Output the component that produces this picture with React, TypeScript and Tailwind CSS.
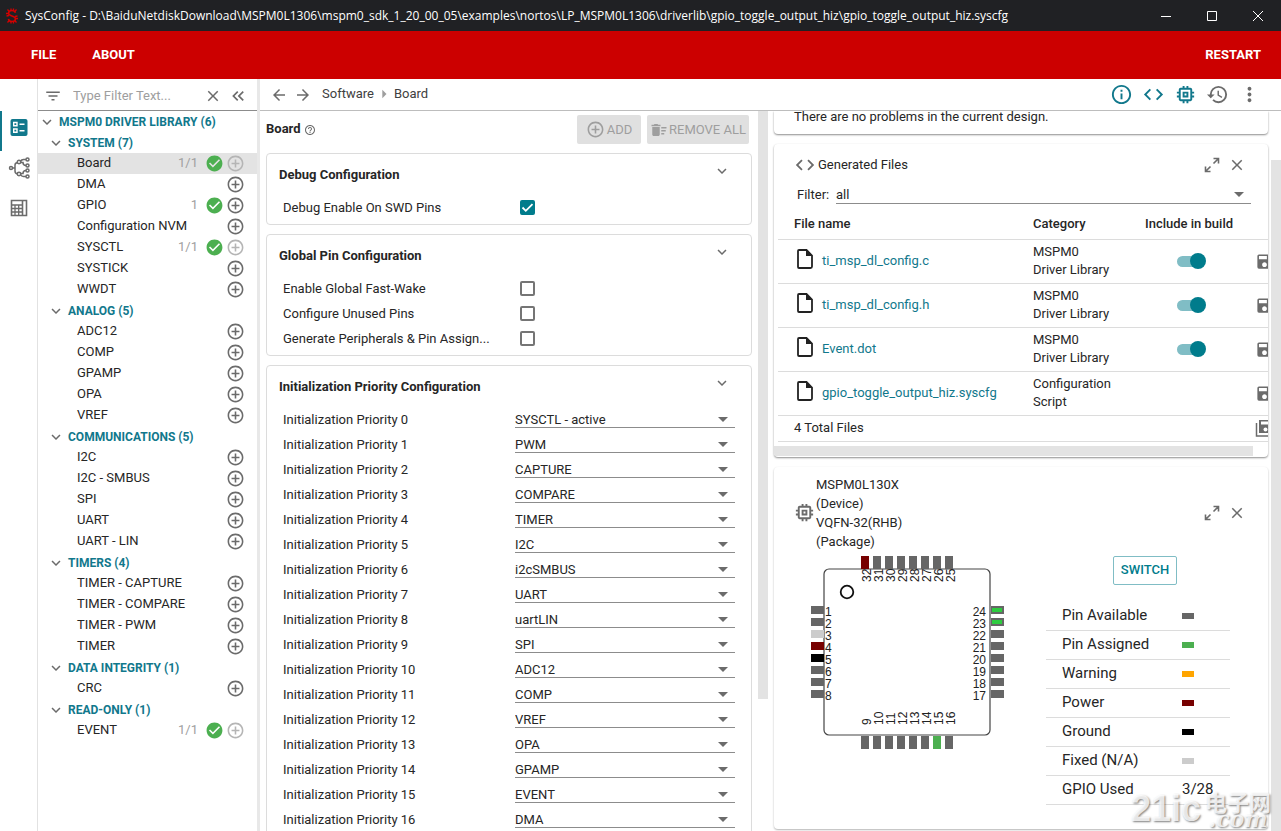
import { useState } from 'react';
import type { ReactNode } from 'react';
import {
  MdAddCircleOutline,
  MdArrowBack,
  MdArrowDropDown,
  MdArrowForward,
  MdArrowRight,
  MdCheckCircle,
  MdClose,
  MdCode,
  MdDeleteSweep,
  MdExpandMore,
  MdFilterList,
  MdHelpOutline,
  MdHistory,
  MdInfoOutline,
  MdKeyboardDoubleArrowLeft,
  MdMemory,
  MdMoreVert,
  MdSave,
} from 'react-icons/md';

interface TreeItem {
  name: string;
  count?: string;
  full?: boolean;
}

interface TreeGroup {
  title: string;
  items: TreeItem[];
}

const groups: TreeGroup[] = [
  {
    title: 'SYSTEM (7)',
    items: [
      { name: 'Board', count: '1/1', full: true },
      { name: 'DMA' },
      { name: 'GPIO', count: '1' },
      { name: 'Configuration NVM' },
      { name: 'SYSCTL', count: '1/1', full: true },
      { name: 'SYSTICK' },
      { name: 'WWDT' },
    ],
  },
  {
    title: 'ANALOG (5)',
    items: [{ name: 'ADC12' }, { name: 'COMP' }, { name: 'GPAMP' }, { name: 'OPA' }, { name: 'VREF' }],
  },
  {
    title: 'COMMUNICATIONS (5)',
    items: [{ name: 'I2C' }, { name: 'I2C - SMBUS' }, { name: 'SPI' }, { name: 'UART' }, { name: 'UART - LIN' }],
  },
  {
    title: 'TIMERS (4)',
    items: [{ name: 'TIMER - CAPTURE' }, { name: 'TIMER - COMPARE' }, { name: 'TIMER - PWM' }, { name: 'TIMER' }],
  },
  { title: 'DATA INTEGRITY (1)', items: [{ name: 'CRC' }] },
  { title: 'READ-ONLY (1)', items: [{ name: 'EVENT', count: '1/1', full: true }] },
];

const priorities = [
  'SYSCTL - active', 'PWM', 'CAPTURE', 'COMPARE', 'TIMER', 'I2C', 'i2cSMBUS', 'UART', 'uartLIN',
  'SPI', 'ADC12', 'COMP', 'VREF', 'OPA', 'GPAMP', 'EVENT', 'DMA',
];

const files = [
  { name: 'ti_msp_dl_config.c', category: ['MSPM0', 'Driver Library'], toggle: true },
  { name: 'ti_msp_dl_config.h', category: ['MSPM0', 'Driver Library'], toggle: true },
  { name: 'Event.dot', category: ['MSPM0', 'Driver Library'], toggle: true },
  { name: 'gpio_toggle_output_hiz.syscfg', category: ['Configuration', 'Script'], toggle: false },
];

const legend = [
  { label: 'Pin Available', color: 'bg-[#666666]' },
  { label: 'Pin Assigned', color: 'bg-[#4caf50]' },
  { label: 'Warning', color: 'bg-[#ffa500]' },
  { label: 'Power', color: 'bg-[#770000]' },
  { label: 'Ground', color: 'bg-black' },
  { label: 'Fixed (N/A)', color: 'bg-[#cccccc]' },
];

const pinColors: Record<number, string> = {
  3: '#cccccc',
  4: '#770000',
  5: '#000000',
  15: '#4caf50',
  32: '#770000',
};

function TitleBar() {
  return (
    <div className="flex h-[31px] shrink-0 items-center bg-[#202124] text-white">
      <svg viewBox="0 0 14 16" className="ml-[5px] h-4 w-3.5 shrink-0" fill="none" stroke="#d40000">
        <path d="M10.5 4.800C10 3.200 8.800 2.500 7 2.500C5 2.500 3.500 3.500 3.500 5.200C3.500 8.500 10.500 7.300 10.500 10.700C10.500 12.500 9 13.500 7 13.500C5 13.500 3.800 12.700 3.400 11" strokeWidth="1.600" />
        <path d="M6 .5v2M8.500 .5v2M6 13.500v2M8.500 13.500v2M2.500 1.500l1.500 1.700M11.500 1.500L10 3.200M1 5.500h2.500M1.500 8l2.500-.5M10 8.500l2.500-.5M10.500 10.500H13M2.500 14.500L4 12.800M11.500 14.500L10 12.800" strokeWidth="1.300" />
      </svg>
      <span className="ml-1.5 flex-1 truncate font-['Open_Sans',sans-serif] text-xs">
        SysConfig - D:\BaiduNetdiskDownload\MSPM0L1306\mspm0_sdk_1_20_00_05\examples\nortos\LP_MSPM0L1306\driverlib\gpio_toggle_output_hiz\gpio_toggle_output_hiz.syscfg
      </span>
      <div className="flex shrink-0">
        <button type="button" aria-label="Minimize" className="flex h-[31px] w-[46px] items-center justify-center">
          <svg viewBox="0 0 10 10" className="size-2.5" stroke="currentColor" fill="none">
            <path d="M0 5.500h10" />
          </svg>
        </button>
        <button type="button" aria-label="Maximize" className="flex h-[31px] w-[46px] items-center justify-center">
          <svg viewBox="0 0 10 10" className="size-2.5" stroke="currentColor" fill="none">
            <path d="M.5.5h9v9h-9z" />
          </svg>
        </button>
        <button type="button" aria-label="Close" className="flex h-[31px] w-[46px] items-center justify-center">
          <svg viewBox="0 0 10 10" className="size-2.5" stroke="currentColor" fill="none">
            <path d="M0 0l10 10M10 0L0 10" />
          </svg>
        </button>
      </div>
    </div>
  );
}

function MenuBar() {
  return (
    <header className="flex h-12 shrink-0 items-center bg-[#cc0000] pr-5 pl-[31px] text-[13px] font-bold text-white">
      <button type="button">FILE</button>
      <button type="button" className="ml-9">ABOUT</button>
      <button type="button" className="ml-auto">RESTART</button>
    </header>
  );
}

function Rail() {
  return (
    <nav className="flex w-[38px] shrink-0 flex-col border-r border-[#e2e2e2] pt-8 text-[#6b6b6b]">
      <button type="button" aria-label="Software" className="flex h-10 items-start border-l-2 border-[#11788c] pt-2 pl-2 text-[#11788c]">
        <svg viewBox="0 0 18 18" className="size-[18px]">
          <rect x=".5" width="17" height="17" rx="2" fill="currentColor" />
          <path d="M3.700 3.500h3.300v3.300h-3.300zM3.700 10h3.300v3.300h-3.300zM9.500 5.200h5M9.500 11.700h5" fill="none" stroke="white" strokeWidth="1.400" />
        </svg>
      </button>
      <button type="button" aria-label="Hardware" className="flex h-10 items-start pt-1.5 pl-2">
        <svg viewBox="0 0 22 22" className="size-[22px]" fill="none" stroke="currentColor" strokeWidth="1.500">
          <path d="M4.500 11H7M9.500 5.500Q7 6 7 8v6q0 2.500 2.500 3M12.500 4.500q1-2 3-2H18M12.500 5.500H15q0 3 3 3M12.500 16.500H15q0-3 3-3M12.500 17.500q1 2 3 2H18" />
          <circle cx="3" cy="11" r="1.500" />
          <circle cx="11" cy="5" r="1.700" />
          <circle cx="11" cy="17" r="1.700" />
          <circle cx="19.500" cy="2.500" r="1.500" />
          <circle cx="19.500" cy="8.500" r="1.500" />
          <circle cx="19.500" cy="13.500" r="1.500" />
          <circle cx="19.500" cy="19.500" r="1.500" />
        </svg>
      </button>
      <button type="button" aria-label="Calculator" className="flex h-10 items-start pt-2 pl-2.5">
        <svg viewBox="0 0 18 18" className="size-[18px]" fill="none" stroke="currentColor">
          <path d="M1.500 1.500h15v15h-15zM12.500 1.500v15" strokeWidth="1.600" />
          <path d="M2 6h10M2 9.500h10M2 13h10M5 6v10M8.700 6v10" strokeWidth="1.300" />
        </svg>
      </button>
    </nav>
  );
}

function Sidebar() {
  const [filter, setFilter] = useState('');

  return (
    <aside className="flex w-[219px] shrink-0 flex-col overflow-hidden">
      <div className="flex h-8 shrink-0 items-center border-b border-[#8c8c8c] pt-0.5 pr-[9px] pl-1.5 text-[#6b6b6b]">
        <MdFilterList size={18} />
        <input
          type="text"
          aria-label="Type Filter Text"
          placeholder="Type Filter Text..."
          value={filter}
          onChange={(e) => setFilter(e.target.value)}
          className="ml-[11px] w-0 flex-1 text-[13px] outline-none placeholder:text-[#9e9e9e]"
        />
        <button type="button" aria-label="Clear filter">
          <MdClose size={18} />
        </button>
        <button type="button" aria-label="Collapse panel" className="ml-1.5">
          <MdKeyboardDoubleArrowLeft size={20} />
        </button>
      </div>

      <div className="flex h-[21px] items-center text-xs font-bold text-[#11788c]">
        <MdExpandMore size={18} className="text-[#6b6b6b]" />
        <span className="ml-[3px]">MSPM0 DRIVER LIBRARY (6)</span>
      </div>
      {groups.map((group) => (
        <div key={group.title}>
          <div className="flex h-[21px] items-center pl-[9px] text-xs font-bold text-[#11788c]">
            <MdExpandMore size={18} className="text-[#6b6b6b]" />
            <span className="ml-[3px]">{group.title}</span>
          </div>
          {group.items.map((item) => (
            <div
              key={item.name}
              className={`flex h-[21px] items-center pr-3 pl-[39px] text-[13px] ${
                item.name === 'Board' ? 'bg-[#e3e3e3]' : ''
              }`}
            >
              <span className="pb-0.5">{item.name}</span>
              {item.count && <span className="mr-[7px] ml-auto pb-0.5 text-[#a0a0a0]">{item.count}</span>}
              {item.count && <MdCheckCircle size={19} className="mr-0.5 text-[#4caf50]" />}
              <button
                type="button"
                aria-label={`Add ${item.name}`}
                disabled={item.full}
                className={`${item.count ? '' : 'ml-auto'} ${item.full ? 'text-[#b5b5b5]' : 'text-[#6b6b6b]'}`}
              >
                <MdAddCircleOutline size={19} />
              </button>
            </div>
          ))}
        </div>
      ))}
    </aside>
  );
}

function Toolbar() {
  return (
    <div className="flex h-8 shrink-0 items-center border-b border-[#bdbdbd] pr-4 pl-2.5 text-[#6b6b6b]">
      <button type="button" aria-label="Back">
        <MdArrowBack size={18} />
      </button>
      <button type="button" aria-label="Forward" className="ml-1.5">
        <MdArrowForward size={18} />
      </button>
      <nav className="ml-2.5 flex items-center pb-0.5 text-[13px] text-[#404040]">
        <a href="#software">Software</a>
        <MdArrowRight size={20} className="text-[#9e9e9e]" />
        <a href="#board">Board</a>
      </nav>
      <div className="ml-auto flex text-[#11788c]">
        <button type="button" aria-label="Problems" className="flex w-8 justify-center">
          <MdInfoOutline size={23} />
        </button>
        <button type="button" aria-label="Generated files" className="flex w-8 justify-center">
          <MdCode size={23} />
        </button>
        <button type="button" aria-label="Device view" className="flex w-8 justify-center">
          <MdMemory size={23} />
        </button>
        <button type="button" aria-label="History" className="flex w-8 justify-center text-[#6b6b6b]">
          <MdHistory size={23} />
        </button>
        <button type="button" aria-label="More" className="flex w-8 justify-center text-[#6b6b6b]">
          <MdMoreVert size={23} />
        </button>
      </div>
    </div>
  );
}

function ConfigCard({ title, children }: { title: string; children: ReactNode }) {
  return (
    <section className="mb-[9px] rounded border border-[#dcdcdc] pb-1">
      <div className="flex h-[41px] items-center justify-between pr-5 pl-3">
        <h2 className="text-[13px] font-bold">{title}</h2>
        <button type="button" aria-label={`Collapse ${title}`} className="mt-2 self-start text-[#6b6b6b]">
          <MdExpandMore size={18} />
        </button>
      </div>
      {children}
    </section>
  );
}

function CheckRow({ id, label, initial = false }: { id: string; label: string; initial?: boolean }) {
  const [checked, setChecked] = useState(initial);

  return (
    <div className="flex h-[25px] items-center pl-4">
      <label htmlFor={id} className="w-[237px] whitespace-nowrap">{label}</label>
      <span className="relative flex size-[15px]">
        <input
          id={id}
          type="checkbox"
          checked={checked}
          onChange={(e) => setChecked(e.target.checked)}
          className="peer size-[15px] appearance-none rounded-xs border-2 border-[#757575] checked:border-[#007c8c] checked:bg-[#007c8c]"
        />
        <svg
          viewBox="0 0 15 15"
          className="pointer-events-none absolute inset-0 hidden peer-checked:block"
          fill="none"
          stroke="white"
          strokeWidth="1.800"
        >
          <path d="M2.500 7.500l3.300 3.300 6.700-6.700" />
        </svg>
      </span>
    </div>
  );
}

function BoardPanel() {
  return (
    <div className="flex min-h-0 overflow-hidden">
      <div className="min-w-0 flex-1 px-1.5">
        <div className="flex h-[42px] items-start pt-1 pr-[3px]">
          <h1 className="mt-1 text-[13px] font-bold">Board</h1>
          <MdHelpOutline size={12} className="mt-[9px] ml-[3px] text-[#6b6b6b]" />
          <button type="button" disabled className="ml-auto flex h-[29px] w-16 items-center justify-center rounded-xs bg-[#e0e0e0] text-[13px] text-[#9e9e9e]">
            <MdAddCircleOutline size={19} className="mr-0.5" />
            ADD
          </button>
          <button type="button" disabled className="ml-1.5 flex h-[29px] w-[102px] items-center justify-center rounded-xs bg-[#e0e0e0] text-[13px] whitespace-nowrap text-[#9e9e9e]">
            <MdDeleteSweep size={18} className="mr-px" />
            REMOVE ALL
          </button>
        </div>

        <div className="text-[13px]">
          <ConfigCard title="Debug Configuration">
            <CheckRow id="swd-pins" label="Debug Enable On SWD Pins" initial />
          </ConfigCard>
          <ConfigCard title="Global Pin Configuration">
            <CheckRow id="fast-wake" label="Enable Global Fast-Wake" />
            <CheckRow id="unused-pins" label="Configure Unused Pins" />
            <CheckRow id="pin-assign" label="Generate Peripherals & Pin Assign..." />
          </ConfigCard>
          <ConfigCard title="Initialization Priority Configuration">
            {priorities.map((value, i) => (
              <div key={value} className="flex h-[25px] items-start pr-4 pl-4">
                <label htmlFor={`priority-${i}`} className="w-[232px] leading-[25px]">
                  Initialization Priority {i}
                </label>
                <div className="relative flex-1">
                  <select
                    id={`priority-${i}`}
                    defaultValue={value}
                    className="block h-[21px] w-full appearance-none border-b border-[#8c8c8c] pt-[3px] outline-none"
                  >
                    {priorities.map((option) => (
                      <option key={option}>{option}</option>
                    ))}
                  </select>
                  <MdArrowDropDown size={24} className="pointer-events-none absolute top-0 right-0 text-[#6b6b6b]" />
                </div>
              </div>
            ))}
          </ConfigCard>
        </div>
      </div>
      <div aria-hidden="true" className="w-2.5 shrink-0">
        <div className="h-[588px] bg-[#e3e3e3]" />
      </div>
    </div>
  );
}

function PanelActions() {
  return (
    <div className="ml-auto flex items-center gap-2 text-[#6b6b6b]">
      <button type="button" aria-label="Expand">
        <svg viewBox="0 0 16 16" className="size-4" fill="none" stroke="currentColor" strokeWidth="1.600">
          <path d="M9.500 1.500h5v5M14.500 1.500l-5 5M1.500 9.500v5h5M1.500 14.500l5-5" />
        </svg>
      </button>
      <button type="button" aria-label="Close">
        <MdClose size={18} />
      </button>
    </div>
  );
}

function Toggle({ label }: { label: string }) {
  const [on, setOn] = useState(true);

  return (
    <span className="relative flex h-4 w-[30px] items-center">
      <input
        type="checkbox"
        role="switch"
        aria-label={label}
        checked={on}
        onChange={(e) => setOn(e.target.checked)}
        className="peer h-[11px] w-[26px] appearance-none rounded-full bg-[#bdbdbd] checked:bg-[#80bdc5]"
      />
      <span className="pointer-events-none absolute top-0 left-0 size-4 rounded-full bg-[#9e9e9e] peer-checked:left-[13px] peer-checked:bg-[#007c8c]" />
    </span>
  );
}

function GeneratedFiles() {
  return (
    <section className="overflow-hidden rounded bg-white shadow-[0_1px_2px_rgba(0,0,0,0.45)]">
      <div className="flex h-[42px] items-center pr-[22px] pl-5">
        <MdCode size={22} className="text-[#6b6b6b]" />
        <h2 className="ml-0.5 text-[13px]">Generated Files</h2>
        <PanelActions />
      </div>
      <div className="flex h-[18px] pr-[17px] pl-[23px]">
        <label htmlFor="file-filter" className="w-[39px] text-[13px] leading-[18px]">Filter:</label>
        <div className="relative flex-1">
          <select id="file-filter" className="block h-[18px] w-full appearance-none border-b border-[#8c8c8c] text-[13px] leading-4 outline-none">
            <option>all</option>
          </select>
          <MdArrowDropDown size={24} className="pointer-events-none absolute -top-1 right-0 text-[#6b6b6b]" />
        </div>
      </div>

      <div className="overflow-hidden pl-1">
        <table className="w-full min-w-[520px] table-fixed text-left text-[13px]">
          <colgroup>
            <col className="w-[239px]" />
            <col className="w-28" />
            <col className="w-28" />
            <col />
          </colgroup>
          <thead>
            <tr className="h-[35px] border-b border-[#dcdcdc]">
              <th className="pt-1 pl-4 font-medium">File name</th>
              <th className="pt-1 pl-4 font-medium">Category</th>
              <th className="pt-1 pl-4 font-medium whitespace-nowrap">Include in build</th>
              <th />
            </tr>
          </thead>
          <tbody>
            {files.map((file) => (
              <tr key={file.name} className="h-11 border-b border-[#dcdcdc]">
                <td>
                  <div className="flex items-center pl-[18px]">
                    <svg viewBox="0 0 18 20" className="mb-1 h-5 w-[18px] shrink-0" fill="none" stroke="#222222" strokeWidth="1.800">
                      <path d="M3 1h7.500L16 6.500V17.500Q16 19 14.500 19H3Q2 19 2 18V2Q2 1 3 1z" />
                      <path d="M10 1v6H16z" fill="#222222" stroke="none" />
                    </svg>
                    <a href={`#${file.name}`} className="ml-2 whitespace-nowrap text-[#11788c]">{file.name}</a>
                  </div>
                </td>
                <td className="pl-4 leading-[18px]">
                  {file.category[0]}
                  <br />
                  {file.category[1]}
                </td>
                <td className="pl-12">{file.toggle && <Toggle label={`Include ${file.name} in build`} />}</td>
                <td className="pl-3.5">
                  <button type="button" aria-label={`Save ${file.name}`} className="flex text-[#6b6b6b]">
                    <MdSave size={19} />
                  </button>
                </td>
              </tr>
            ))}
            <tr className="h-[26px] border-b border-[#dcdcdc]">
              <td className="pl-4" colSpan={3}>4 Total Files</td>
              <td className="pl-3.5">
                <button type="button" aria-label="Save all" className="flex text-[#6b6b6b]">
                  <svg viewBox="0 0 18 18" className="size-[18px]" fill="none" stroke="currentColor" strokeWidth="1.500">
                    <path d="M1.500 4v13h13" />
                    <path d="M4 1h10l3.500 3.500V14H4z" fill="currentColor" stroke="none" />
                    <path d="M6 2.500h7v3H6z" fill="white" stroke="none" />
                    <circle cx="10.500" cy="10.500" r="2" fill="white" stroke="none" />
                  </svg>
                </button>
              </td>
            </tr>
          </tbody>
        </table>
      </div>
      <div aria-hidden="true" className="mt-1 mr-[15px] mb-px h-2.5 bg-[#e3e3e3]" />
    </section>
  );
}

function PackageDrawing() {
  const steps = [0, 1, 2, 3, 4, 5, 6, 7];

  return (
    <svg viewBox="0 0 194 194" className="size-[194px] shrink-0 font-['Liberation_Sans',sans-serif] text-xs" fill="#222222">
      <rect x="13" y="13" width="166" height="166" rx="5" fill="none" stroke="#444444" strokeWidth="1.200" />
      <circle cx="36" cy="36" r="6.300" fill="none" stroke="#111111" strokeWidth="1.800" />
      {steps.map((i) => {
        const left = i + 1;
        const bottom = i + 9;
        const right = 24 - i;
        const top = 32 - i;
        return (
          <g key={i}>
            <rect x="0" y={50 + i * 12} width="13" height="8" fill={pinColors[left] ?? '#666666'} />
            <text x="14" y={60 + i * 12}>{left}</text>
            <rect x="180" y={50 + i * 12} width="13" height="8" fill="#666666" />
            {right > 22 && <rect x="181" y={52 + i * 12} width="10" height="4" fill="#2ecc40" />}
            <text x="175" y={60 + i * 12} textAnchor="end">{right}</text>
            <rect x={50 + i * 12} y="0" width="8" height="13" fill={pinColors[top] ?? '#666666'} />
            <text transform={`translate(${60 + i * 12} 26) rotate(-90)`}>{top}</text>
            <rect x={50 + i * 12} y="180" width="8" height="13" fill={pinColors[bottom] ?? '#666666'} />
            <text transform={`translate(${60 + i * 12} 169) rotate(-90)`}>{bottom}</text>
          </g>
        );
      })}
    </svg>
  );
}

function DevicePanel() {
  return (
    <section className="rounded bg-white pt-2 pb-6 shadow-[0_1px_2px_rgba(0,0,0,0.3)]">
      <div className="flex items-center pr-[22px] pl-[19px]">
        <MdMemory size={23} className="text-[#6b6b6b]" />
        <h2 className="text-[13px] leading-[19px]">
          MSPM0L130X
          <br />
          (Device)
          <br />
          VQFN-32(RHB)
          <br />
          (Package)
        </h2>
        <PanelActions />
      </div>
      <div className="mt-[5px] flex pr-[38px] pl-[37px]">
        <PackageDrawing />
        <div className="ml-[41px] flex-1">
          <button type="button" className="ml-[67px] block h-[29px] w-16 rounded-xs border border-[#80bdc5] text-[13px] font-medium text-[#007c8c]">
            SWITCH
          </button>
          <dl className="mt-[17px] text-[15px]">
            {legend.map((entry) => (
              <div key={entry.label} className="flex h-[29px] items-center border-b border-[#dcdcdc] pl-4">
                <dt className="w-[120px]">{entry.label}</dt>
                <dd className={`h-1.5 w-3 ${entry.color}`} />
              </div>
            ))}
            <div className="flex h-[29px] items-center border-b border-[#dcdcdc] pl-4">
              <dt className="w-[120px]">GPIO Used</dt>
              <dd>3/28</dd>
            </div>
          </dl>
        </div>
      </div>
    </section>
  );
}

function OutputPanel() {
  return (
    <div className="flex min-h-0 overflow-hidden">
      <div className="flex min-w-0 flex-1 flex-col gap-2.5 pr-[3px] pl-1.5">
        <section className="h-[23px] shrink-0 rounded-b bg-white pl-5 text-[13px] leading-3 shadow-[0_1px_2px_rgba(0,0,0,0.45)]">
          There are no problems in the current design.
        </section>
        <GeneratedFiles />
        <DevicePanel />
      </div>
      <div aria-hidden="true" className="w-2.5 shrink-0 pt-[49px]">
        <div className="h-full bg-[#e3e3e3]" />
      </div>
    </div>
  );
}

function Watermark() {
  return (
    <div
      aria-hidden="true"
      className="pointer-events-none absolute right-2.5 bottom-1 flex items-end gap-1 text-white/80 select-none [text-shadow:1px_1px_2px_rgba(0,0,0,0.5)]"
    >
      <span className="font-['Liberation_Sans_Narrow','Liberation_Sans',sans-serif] text-4xl leading-9 font-bold">21ic</span>
      <span className="flex flex-col items-center">
        <span className="font-['Noto_Sans_CJK_SC',sans-serif] text-[22px] leading-5 font-bold">电子网</span>
        <span className="font-['DejaVu_Serif',serif] text-[22px] leading-4 font-bold italic">.com</span>
      </span>
    </div>
  );
}

export default function App() {
  return (
    <div className="relative flex h-screen flex-col overflow-hidden bg-white font-['Roboto',sans-serif] text-[#262626]">
      <TitleBar />
      <MenuBar />
      <div className="flex min-h-0 flex-1">
        <Rail />
        <Sidebar />
        <div className="w-[3px] shrink-0 bg-[#e8e8e8]" />
        <main className="flex min-w-0 flex-1 flex-col">
          <Toolbar />
          <div className="grid min-h-0 flex-1 grid-cols-[508fr_513fr]">
            <BoardPanel />
            <OutputPanel />
          </div>
        </main>
      </div>
      <Watermark />
    </div>
  );
}
